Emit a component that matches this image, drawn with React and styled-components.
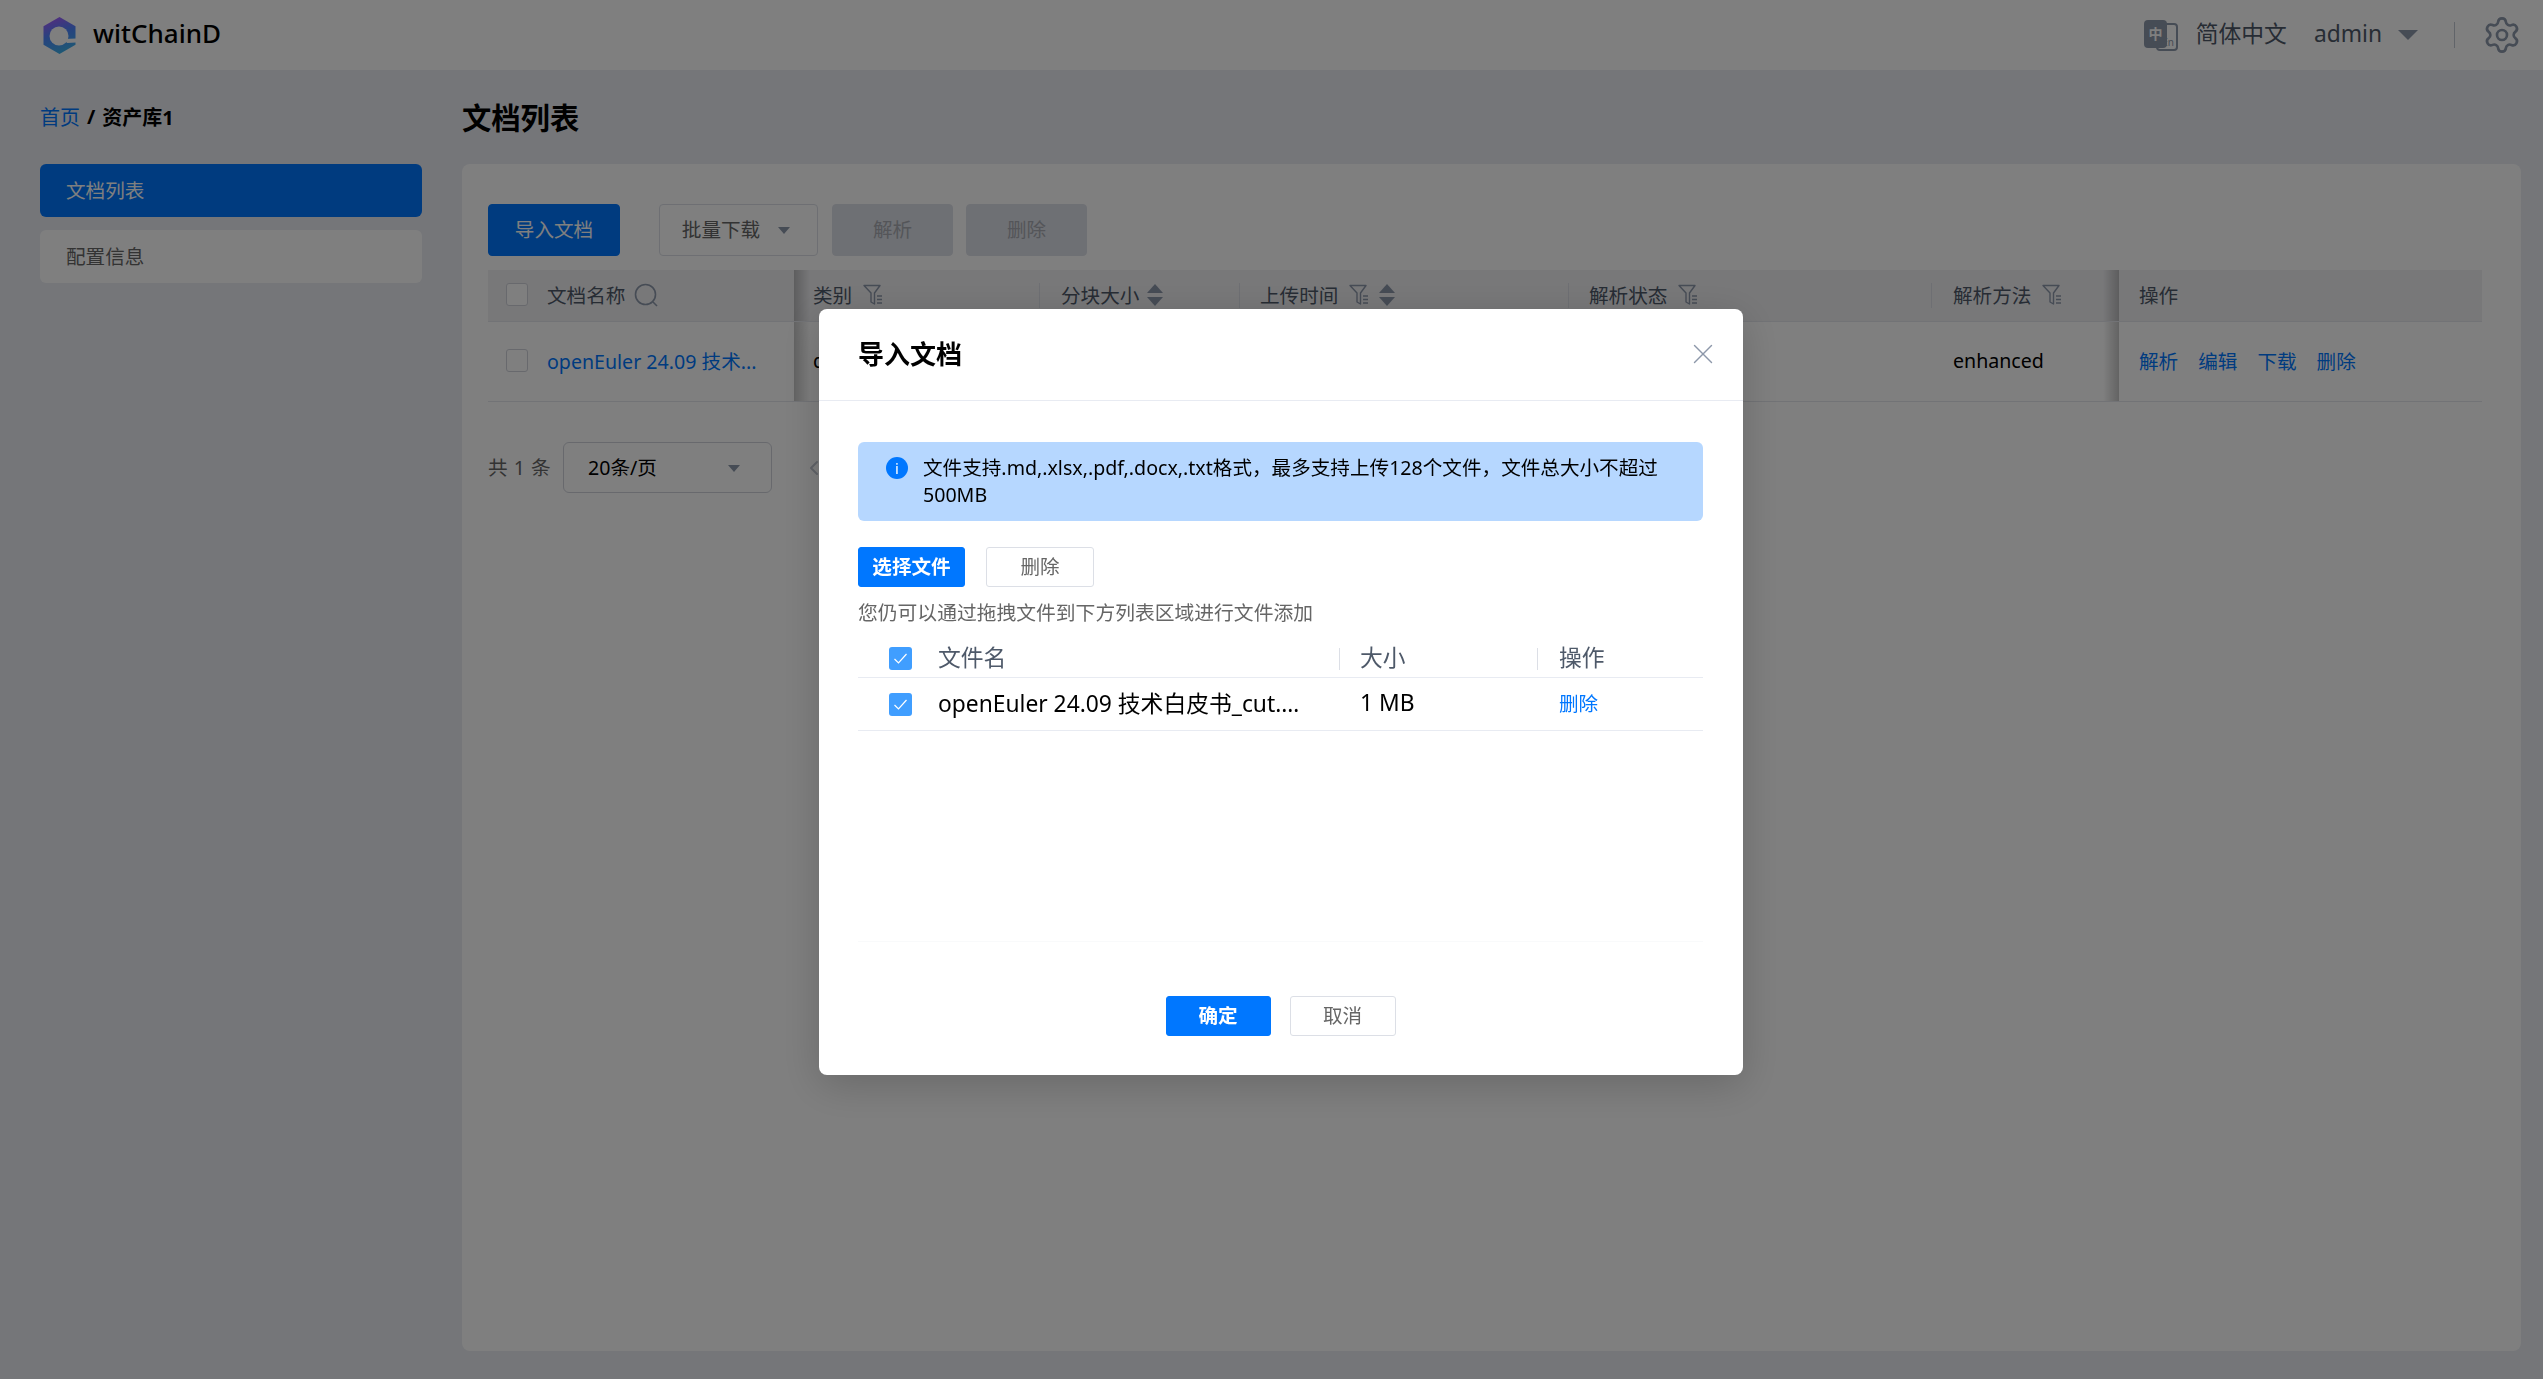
import React from 'react';
import styled, { createGlobalStyle } from 'styled-components';
import { Settings, ChevronLeft, X } from 'lucide-react';

const GlobalStyle = createGlobalStyle`
	html, body {
		margin: 0;
		height: 100%;
		overflow: hidden;
		background: #eaecf2;
		font-family: "Noto Sans", "Noto Sans CJK SC", sans-serif;
		color: #000;
	}
	* {
		box-sizing: border-box;
	}
`;

const Page = styled.div`
	height: 100vh;
	display: flex;
	flex-direction: column;
`;

const Header = styled.header`
	height: 70px;
	flex: none;
	background: #fff;
	display: flex;
	align-items: center;
	padding: 0 21px 0 43px;
`;

const Brand = styled.div`
	font-size: 26px;
	line-height: 34px;
	font-weight: 500;
	margin-left: 17px;
	padding-bottom: 4px;
	flex: 1;
`;

const LangText = styled.span`
	font-size: 22.8px;
	line-height: 30px;
	color: #4e5969;
	margin-left: 18px;
	padding-bottom: 3px;
`;

const UserName = styled.span`
	font-size: 22.8px;
	line-height: 30px;
	color: #4e5969;
	margin-left: 27px;
	padding-bottom: 3px;
`;

const HeaderCaret = styled.span`
	width: 0;
	height: 0;
	margin-left: 16px;
	border-left: 10px solid transparent;
	border-right: 10px solid transparent;
	border-top: 10px solid #8d98aa;
`;

const HeaderDivider = styled.span`
	width: 1px;
	height: 26px;
	margin: 0 27px 0 36px;
	background: #c3c8d2;
`;

const Body = styled.div`
	flex: 1;
	min-height: 0;
	display: flex;
	gap: 40px;
	padding: 0 22px 28px 40px;
`;

const Side = styled.aside`
	width: 382px;
	flex: none;
`;

const Crumbs = styled.div`
	height: 94px;
	display: flex;
	align-items: center;
	padding-bottom: 2px;
	font-size: 20px;
	font-weight: 700;
	gap: 7px;
`;

const CrumbLink = styled.span`
	color: #0077ff;
	font-weight: 400;
`;

const SideItem = styled.div`
	height: 53px;
	margin-bottom: 13px;
	padding: 0 0 2px 26px;
	display: flex;
	align-items: center;
	border-radius: 6px;
	font-size: 19.6px;
	background: ${(p) => (p.$active ? '#0077ff' : '#fff')};
	color: ${(p) => (p.$active ? '#fff' : '#666')};
`;

const Main = styled.main`
	flex: 1;
	min-width: 0;
	display: flex;
	flex-direction: column;
`;

const PageTitle = styled.h1`
	margin: 0;
	height: 94px;
	flex: none;
	display: flex;
	align-items: center;
	padding-bottom: 2px;
	font-size: 29.3px;
	font-weight: 700;
`;

const Card = styled.section`
	flex: 1;
	background: #fff;
	border-radius: 8px;
	padding: 40px 39px 0 26px;
`;

const Toolbar = styled.div`
	display: flex;
	height: 52px;
	margin-bottom: 14px;
`;

const ToolButton = styled.button`
	height: 52px;
	width: ${(p) => p.$w}px;
	margin-left: ${(p) => p.$ml || 0}px;
	border-radius: 4px;
	font: inherit;
	font-size: 19.6px;
	padding: 0 ${(p) => p.$pr || 0}px 3px 0;
	display: flex;
	align-items: center;
	justify-content: center;
	gap: 18px;
	border: 1px solid ${(p) => (p.$primary ? '#0077ff' : p.$disabled ? '#dde0e8' : '#dcdfe6')};
	background: ${(p) => (p.$primary ? '#0077ff' : p.$disabled ? '#dde0e8' : '#fff')};
	color: ${(p) => (p.$primary ? '#fff' : p.$disabled ? '#a8abb2' : '#666')};
`;

const SmallCaret = styled.span`
	width: 0;
	height: 0;
	margin-top: 3px;
	border-left: 6px solid transparent;
	border-right: 6px solid transparent;
	border-top: 7px solid #8d98aa;
`;

const GRID = '306px 245px 200px 329px 363px 188px 363px';

const HeadRow = styled.div`
	display: grid;
	grid-template-columns: ${GRID};
	height: 52px;
	background: #f0f0f3;
	border-bottom: 1px solid #e4e6ec;
`;

const BodyRow = styled.div`
	display: grid;
	grid-template-columns: ${GRID};
	height: 80px;
	border-bottom: 1px solid #e4e6ec;
`;

const Cell = styled.div`
	position: relative;
	display: flex;
	align-items: center;
	padding-left: ${(p) => p.$pad ?? 22}px;
	padding-bottom: 2px;
	font-size: 19.6px;
	color: ${(p) => p.$color || '#4e5969'};
	white-space: nowrap;

	${(p) =>
		p.$sep &&
		`&::before {
			content: '';
			position: absolute;
			left: 0;
			top: 13px;
			bottom: 13px;
			width: 1px;
			background: #dcdfe6;
		}`}

	${(p) =>
		p.$shadowRight &&
		`&::after {
			content: '';
			position: absolute;
			top: 0;
			bottom: 0;
			right: 0;
			width: 16px;
			transform: translateX(100%);
			background: linear-gradient(90deg, rgba(0, 0, 0, 0.22), rgba(0, 0, 0, 0));
		}`}

	${(p) =>
		p.$shadowLeft &&
		`&::after {
			content: '';
			position: absolute;
			top: 0;
			bottom: 0;
			left: 0;
			width: 16px;
			transform: translateX(-100%);
			background: linear-gradient(270deg, rgba(0, 0, 0, 0.22), rgba(0, 0, 0, 0));
		}`}
`;

const Check = styled.span`
	width: 22px;
	height: 23px;
	flex: none;
	border-radius: 3px;
	border: 1px solid #d0d3db;
	background: #fff;
	margin-right: 19px;
`;

const HeadIcon = styled.span`
	display: flex;
	margin-left: ${(p) => p.$ml}px;
`;

const RowLink = styled.span`
	color: #0077ff;
	font-size: 19.6px;
	margin-right: ${(p) => p.$mr || 0}px;
`;

const Pager = styled.div`
	margin-top: 40px;
	display: flex;
	align-items: center;
	font-size: 19.6px;
	color: #666;
`;

const Total = styled.span`
	width: 75px;
	word-spacing: 1px;
	padding-bottom: 2px;
`;

const PageSelect = styled.div`
	width: 209px;
	height: 51px;
	border: 1px solid #d0d3db;
	border-radius: 6px;
	display: flex;
	align-items: center;
	justify-content: space-between;
	padding: 0 31px 2px 24px;
	color: #000;
`;

const PrevIcon = styled.span`
	display: flex;
	margin-left: 30px;
	color: #c3c8d2;
`;

/* overlay + dialog */
const Mask = styled.div`
	position: fixed;
	inset: 0;
	background: rgba(0, 0, 0, 0.5);
`;

const Dialog = styled.div`
	position: fixed;
	left: 819px;
	top: 309px;
	width: 924px;
	height: 766px;
	background: #fff;
	border-radius: 8px;
	box-shadow: 0 10px 40px rgba(0, 0, 0, 0.18);
	display: flex;
	flex-direction: column;
`;

const DialogHead = styled.div`
	height: 92px;
	flex: none;
	display: flex;
	align-items: center;
	justify-content: space-between;
	padding: 0 23px 0 39px;
	border-bottom: 1px solid #e8ebf2;
	font-size: 26px;
	font-weight: 700;
`;

const DialogTitle = styled.span`
	padding-bottom: 4px;
`;

const CloseIcon = styled.span`
	display: flex;
	padding-bottom: 2px;
	color: #8d98aa;
`;

const DialogBody = styled.div`
	flex: 1;
	padding: 41px 40px 0 39px;
	display: flex;
	flex-direction: column;
`;

const Alert = styled.div`
	height: 79px;
	flex: none;
	background: #b6d7ff;
	border-radius: 6px;
	padding: 13px 40px 0 28px;
	display: flex;
	gap: 15px;
	font-size: 19.6px;
	line-height: 26.5px;
`;

const AlertText = styled.div`
	flex: 1;
`;

const InfoIcon = styled.span`
	width: 22px;
	height: 22px;
	flex: none;
	margin-top: 2px;
	border-radius: 50%;
	background: #0077ff;
	color: #fff;
	font-size: 15px;
	line-height: 22px;
	text-align: center;
`;

const ActionRow = styled.div`
	display: flex;
	gap: 21px;
	margin-top: 26px;
`;

const DialogButton = styled.button`
	width: ${(p) => p.$w}px;
	height: 40px;
	padding: 0 0 3px;
	border-radius: 3px;
	font: inherit;
	font-size: 19.6px;
	font-weight: ${(p) => (p.$primary ? 700 : 400)};
	border: 1px solid ${(p) => (p.$primary ? '#0077ff' : '#dcdfe6')};
	background: ${(p) => (p.$primary ? '#0077ff' : '#fff')};
	color: ${(p) => (p.$primary ? '#fff' : '#666')};
`;

const Hint = styled.div`
	margin-top: 12px;
	font-size: 19.8px;
	line-height: 28px;
	color: #666;
`;

const FileTable = styled.div`
	margin-top: 12px;
	height: 303px;
	flex: none;
	border-bottom: 1px solid #f9fafb;
`;

const FILE_GRID = '80px 401px 198px 1fr';

const FileRow = styled.div`
	display: grid;
	grid-template-columns: ${FILE_GRID};
	height: ${(p) => p.$h}px;
	align-items: center;
	border-bottom: 1px solid #e8ebf2;
	font-size: 22.8px;
	color: ${(p) => (p.$head ? '#4e5969' : '#000')};
`;

const FileCell = styled.div`
	position: relative;
	display: flex;
	align-items: center;
	min-width: 0;
	height: 100%;
	padding-left: ${(p) => p.$pad ?? 0}px;
	padding-bottom: 3px;

	${(p) =>
		p.$sep &&
		`&::before {
			content: '';
			position: absolute;
			left: 0;
			top: 9px;
			height: 22px;
			width: 1px;
			background: #dcdfe6;
		}`}
`;

const Ticked = styled.span`
	width: 23px;
	height: 23px;
	flex: none;
	margin-left: 31px;
	margin-top: 3px;
	border-radius: 3px;
	background: #409eff;
	display: flex;
	align-items: center;
	justify-content: center;
`;

const FileName = styled.span`
	display: block;
	width: 368px;
	overflow: hidden;
	white-space: nowrap;
	text-overflow: ellipsis;
`;

const FileLink = styled.span`
	font-size: 19.6px;
	color: #0077ff;
`;

const DialogFoot = styled.div`
	display: flex;
	justify-content: center;
	gap: 19px;
	margin-top: 54px;
`;

function Logo() {
	return (
		<svg width="33" height="37" viewBox="0 0 33 37">
			<defs>
				<linearGradient id="logoGrad" x1="0.35" y1="0" x2="0.65" y2="1">
					<stop offset="0" stopColor="#a45cff" />
					<stop offset="0.45" stopColor="#4d86ff" />
					<stop offset="1" stopColor="#3cb4e6" />
				</linearGradient>
			</defs>
			<path fill="url(#logoGrad)" d="M16.5 0 L32.5 9.2 V27.8 L16.5 37 L0.5 27.8 V9.2 Z" />
			<circle cx="16" cy="19" r="9.5" fill="#fff" />
			<path fill="#fff" d="M21 22 L33 21.5 V25.5 L24 26 Z" />
		</svg>
	);
}

function LangIcon() {
	return (
		<svg width="34" height="31" viewBox="0 0 34 31">
			<rect x="13" y="4" width="20" height="26" rx="3" fill="#fff" stroke="#8d98aa" strokeWidth="2" />
			<rect x="0" y="0" width="23" height="28" rx="4" fill="#8d98aa" />
			<text x="11.5" y="19" fontSize="14" fontWeight="700" fill="#fff" textAnchor="middle">中</text>
			<text x="24" y="26" fontSize="10" fill="#8d98aa" textAnchor="middle">En</text>
		</svg>
	);
}

function FilterIcon() {
	return (
		<svg width="21" height="22" viewBox="0 0 21 22" fill="none" stroke="#8d98aa" strokeWidth="1.4">
			<path d="M1 1.5 H17 L11.5 9 V20 L8 18 V9 Z" strokeLinejoin="round" />
			<path d="M14 12 H19 M14 15.5 H19 M14 19 H19" />
		</svg>
	);
}

function SortIcon() {
	return (
		<svg width="16" height="22" viewBox="0 0 16 22" fill="#8d98aa">
			<path d="M8 0 L16 9 H0 Z" />
			<path d="M8 22 L16 13 H0 Z" />
		</svg>
	);
}

function SearchIcon() {
	return (
		<svg width="24" height="24" viewBox="0 0 24 24" fill="none" stroke="#8d98aa" strokeWidth="1.6">
			<circle cx="11.5" cy="11.5" r="10" />
			<path d="M19 19 L23 23" />
		</svg>
	);
}

function Tick() {
	return (
		<svg width="15" height="13" viewBox="0 0 15 13" fill="none" stroke="#fff" strokeWidth="1.2">
			<path d="M1.5 7 L5.5 11 L13.5 2" />
		</svg>
	);
}

export default function App() {
	return (
		<Page>
			<GlobalStyle />
			<Header>
				<Logo />
				<Brand>witChainD</Brand>
				<LangIcon />
				<LangText>简体中文</LangText>
				<UserName>admin</UserName>
				<HeaderCaret />
				<HeaderDivider />
				<Settings size={40} color="#8d98aa" strokeWidth={1.6} />
			</Header>
			<Body>
				<Side>
					<Crumbs>
						<CrumbLink>首页</CrumbLink>
						<span>/</span>
						<span>资产库1</span>
					</Crumbs>
					<SideItem $active>文档列表</SideItem>
					<SideItem>配置信息</SideItem>
				</Side>
				<Main>
					<PageTitle>文档列表</PageTitle>
					<Card>
						<Toolbar>
							<ToolButton $primary $w={132}>导入文档</ToolButton>
							<ToolButton $w={159} $ml={39} $pr={5}>批量下载<SmallCaret /></ToolButton>
							<ToolButton $disabled $w={121} $ml={14}>解析</ToolButton>
							<ToolButton $disabled $w={121} $ml={13}>删除</ToolButton>
						</Toolbar>
						<HeadRow>
							<Cell $pad={18} $shadowRight>
								<Check />
								文档名称
								<HeadIcon $ml={9}><SearchIcon /></HeadIcon>
							</Cell>
							<Cell $pad={19}>类别<HeadIcon $ml={11}><FilterIcon /></HeadIcon></Cell>
							<Cell $sep>分块大小<HeadIcon $ml={8}><SortIcon /></HeadIcon></Cell>
							<Cell $sep $pad={21}>上传时间<HeadIcon $ml={11}><FilterIcon /></HeadIcon><HeadIcon $ml={9}><SortIcon /></HeadIcon></Cell>
							<Cell $sep $pad={21}>解析状态<HeadIcon $ml={11}><FilterIcon /></HeadIcon></Cell>
							<Cell $sep>解析方法<HeadIcon $ml={11}><FilterIcon /></HeadIcon></Cell>
							<Cell $pad={20} $shadowLeft>操作</Cell>
						</HeadRow>
						<BodyRow>
							<Cell $pad={18} $shadowRight>
								<Check />
								<RowLink>openEuler 24.09 技术...</RowLink>
							</Cell>
							<Cell $pad={19} $color="#000">docx</Cell>
							<Cell />
							<Cell />
							<Cell />
							<Cell $color="#000">enhanced</Cell>
							<Cell $pad={20} $shadowLeft>
								<RowLink $mr={20}>解析</RowLink>
								<RowLink $mr={20}>编辑</RowLink>
								<RowLink $mr={20}>下载</RowLink>
								<RowLink>删除</RowLink>
							</Cell>
						</BodyRow>
						<Pager>
							<Total>共 1 条</Total>
							<PageSelect>
								20条/页
								<SmallCaret />
							</PageSelect>
							<PrevIcon><ChevronLeft size={24} /></PrevIcon>
						</Pager>
					</Card>
				</Main>
			</Body>
			<Mask />
			<Dialog>
				<DialogHead>
					<DialogTitle>导入文档</DialogTitle>
					<CloseIcon><X size={34} strokeWidth={1} /></CloseIcon>
				</DialogHead>
				<DialogBody>
					<Alert>
						<InfoIcon>i</InfoIcon>
						<AlertText>文件支持.md,.xlsx,.pdf,.docx,.txt格式，最多支持上传128个文件，文件总大小不超过500MB</AlertText>
					</Alert>
					<ActionRow>
						<DialogButton $primary $w={107}>选择文件</DialogButton>
						<DialogButton $w={108}>删除</DialogButton>
					</ActionRow>
					<Hint>您仍可以通过拖拽文件到下方列表区域进行文件添加</Hint>
					<FileTable>
						<FileRow $head $h={39}>
							<FileCell><Ticked><Tick /></Ticked></FileCell>
							<FileCell>文件名</FileCell>
							<FileCell $sep $pad={21}>大小</FileCell>
							<FileCell $sep $pad={22}>操作</FileCell>
						</FileRow>
						<FileRow $h={53}>
							<FileCell><Ticked><Tick /></Ticked></FileCell>
							<FileCell><FileName>openEuler 24.09 技术白皮书_cut.docx</FileName></FileCell>
							<FileCell $pad={21}>1 MB</FileCell>
							<FileCell $pad={22}><FileLink>删除</FileLink></FileCell>
						</FileRow>
					</FileTable>
					<DialogFoot>
						<DialogButton $primary $w={105}>确定</DialogButton>
						<DialogButton $w={106}>取消</DialogButton>
					</DialogFoot>
				</DialogBody>
			</Dialog>
		</Page>
	);
}
